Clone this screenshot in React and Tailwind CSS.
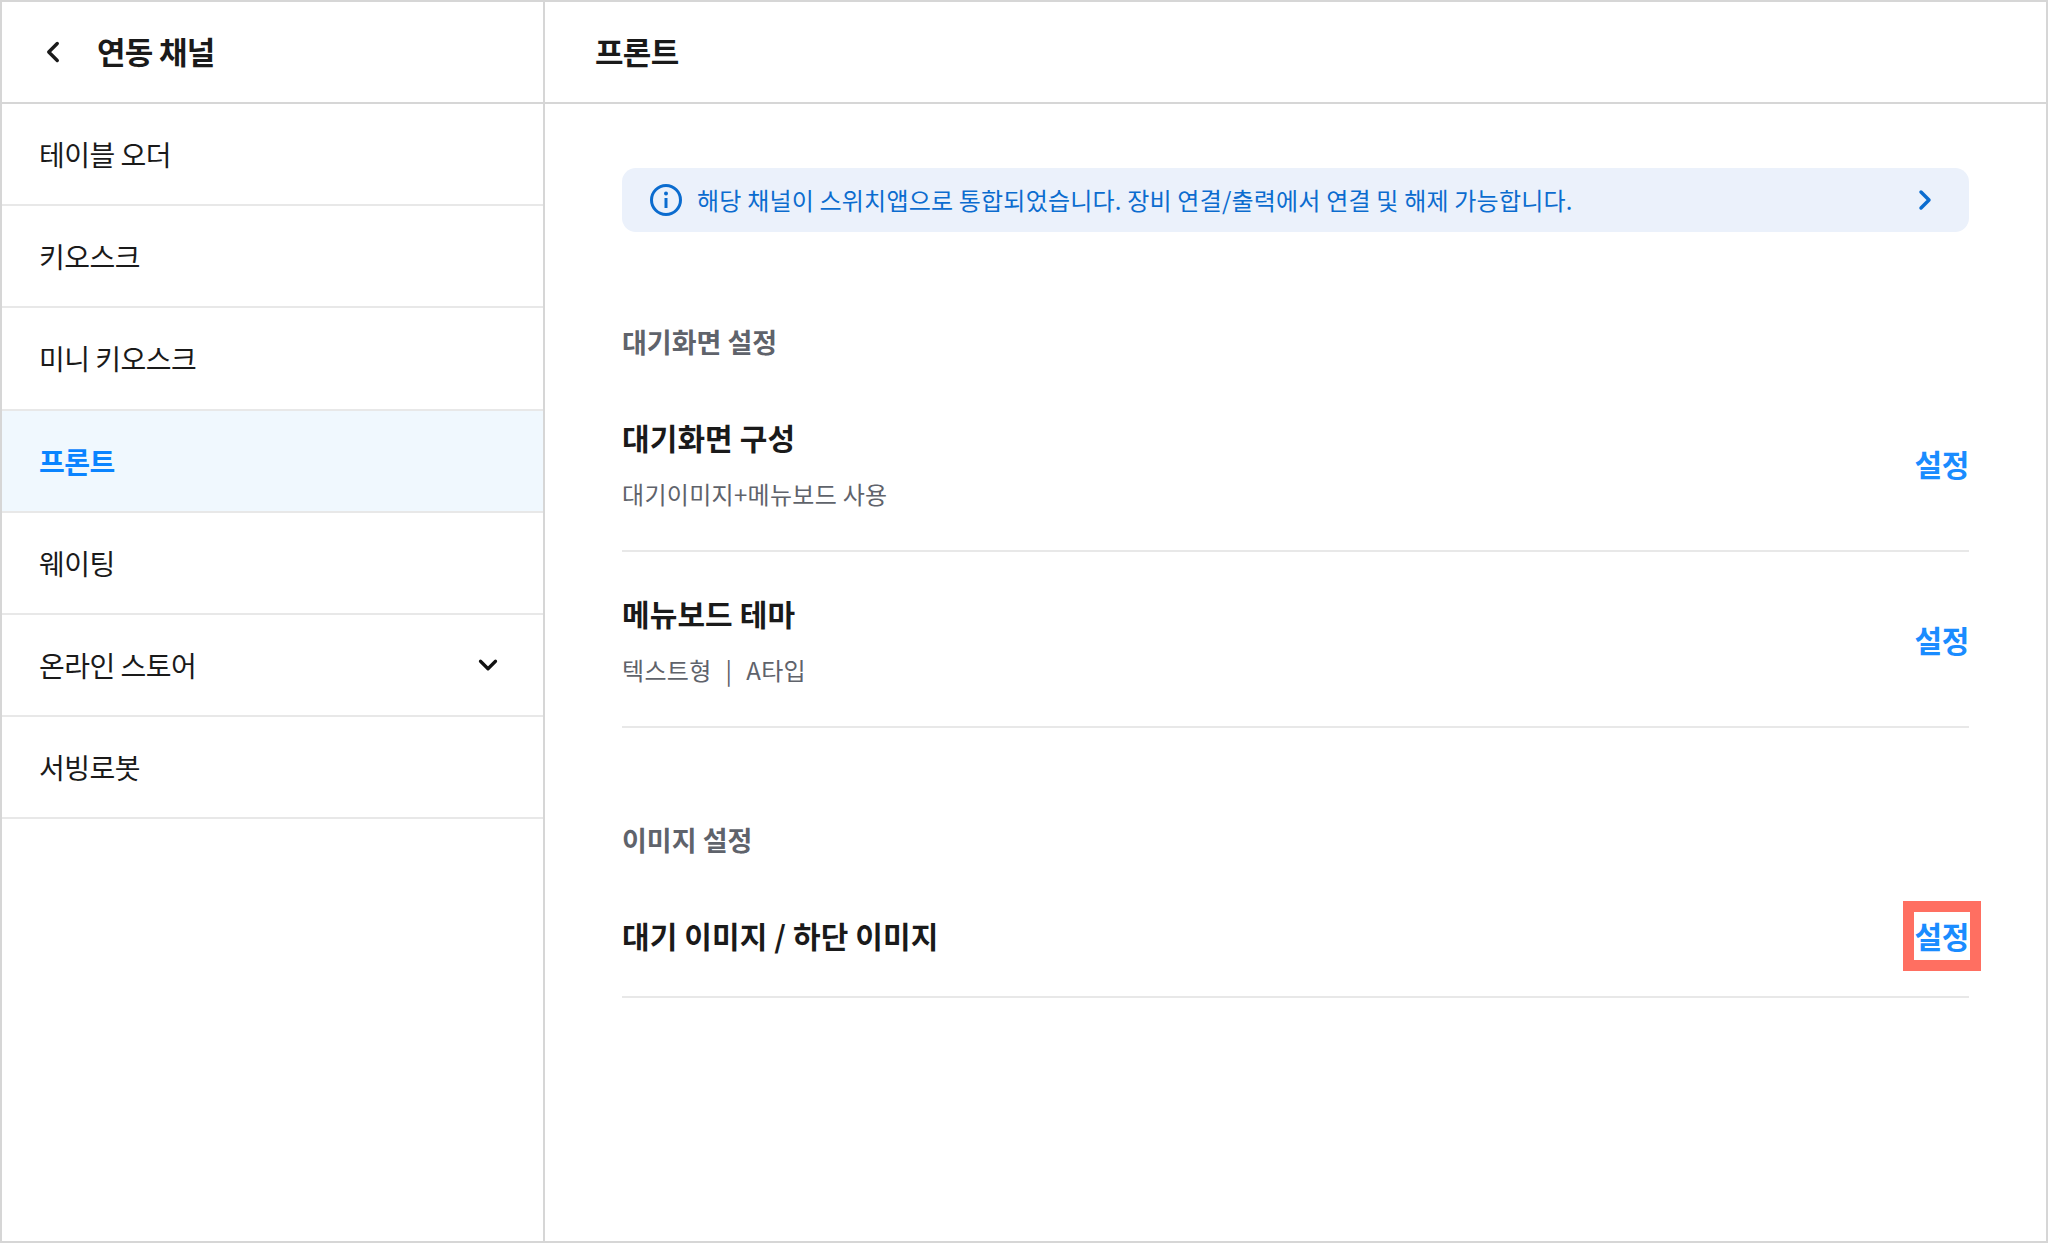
import { ChevronDown, ChevronLeft, ChevronRight } from 'lucide-react';

const channels = ['테이블 오더', '키오스크', '미니 키오스크', '프론트', '웨이팅', '온라인 스토어', '서빙로봇'];

const SettingRow = ({ title, sub, highlight }) => (
  <div className={`flex items-center justify-between border-b-2 border-[#e8e8e8] ${sub ? 'h-[176px]' : 'h-[124px]'}`}>
    <div>
      <div className="text-[30px] leading-[40px] font-bold text-[#1a1a1a] tracking-[0.1px]">{title}</div>
      {sub && <div className="mt-[21px] text-[24px] leading-[32px] text-[#5f636b] tracking-[0.3px]">{sub}</div>}
    </div>
    <button className="relative text-[30px] leading-[48px] font-bold text-[#1a8cff] tracking-[-0.4px]">
      설정
      {highlight && <span className="absolute -inset-x-[12px] -top-[10px] -bottom-[12px] border-[11px] border-[#ff6f61]" />}
    </button>
  </div>
);

const SectionTitle = ({ children }) => (
  <h3 className="text-[27px] leading-[36px] font-bold text-[#5f636b]">{children}</h3>
);

export default function App() {
  return (
    <div className="w-[2048px] h-[1243px] flex flex-col bg-white border-2 border-[#d6d6d6] overflow-hidden font-['Noto_Sans_CJK_KR',sans-serif] antialiased">
      <header className="h-[102px] shrink-0 flex border-b-2 border-[#d6d6d6]">
        <div className="w-[543px] shrink-0 flex items-center border-r-2 border-[#d6d6d6] pl-[34px]">
          <ChevronLeft className="w-[34px] h-[34px] text-[#1a1a1a]" strokeWidth={2.4} />
          <span className="ml-[27px] -mt-[2px] text-[31px] font-bold text-[#1a1a1a] tracking-[-0.7px]">연동 채널</span>
        </div>
        <div className="flex-1 flex items-center pl-[50px]">
          <span className="-mt-[2px] text-[31px] font-bold text-[#1a1a1a] tracking-[-0.7px]">프론트</span>
        </div>
      </header>
      <div className="flex-1 flex min-h-0">
        <nav className="w-[543px] shrink-0 border-r-2 border-[#d6d6d6]">
          {channels.map((name) => {
            const active = name === '프론트';
            return (
              <div
                key={name}
                className={`h-[102.2px] flex items-center justify-between pl-[37px] pr-[40px] border-b-2 border-[#e8e8e8] text-[28px] tracking-[-0.5px] ${active ? 'bg-[#f0f8fe] text-[#0a84ff] font-bold' : 'text-[#1a1a1a]'}`}
              >
                <span>{name}</span>
                {name === '온라인 스토어' && <ChevronDown className="w-[30px] h-[30px] text-[#111]" strokeWidth={2.6} />}
              </div>
            );
          })}
        </nav>
        <main className="flex-1 pt-[64px] pl-[77px] pr-[77px]">
          <div className="h-[64px] flex items-center rounded-[14px] bg-[#ebf1fb] pl-[26px] pr-[28px] text-[#0b6ccf]">
            <svg className="w-[36px] h-[36px] shrink-0" viewBox="0 0 36 36" fill="none">
              <circle cx="18" cy="18" r="14.5" stroke="currentColor" strokeWidth="3" />
              <circle cx="18" cy="11.5" r="2" fill="currentColor" />
              <path d="M18 16v10" stroke="currentColor" strokeWidth="3" />
            </svg>
            <span className="ml-[13px] flex-1 text-[24px] tracking-[0.2px]">해당 채널이 스위치앱으로 통합되었습니다. 장비 연결/출력에서 연결 및 해제 가능합니다.</span>
            <ChevronRight className="w-[32px] h-[32px] shrink-0" strokeWidth={2.6} />
          </div>

          <section className="mt-[92px]">
            <SectionTitle>대기화면 설정</SectionTitle>
            <div className="mt-[16px]">
              <SettingRow title="대기화면 구성" sub="대기이미지+메뉴보드 사용" />
              <SettingRow
                title="메뉴보드 테마"
                sub={<>텍스트형<span className="mx-[14px]">|</span>A타입</>}
              />
            </div>
          </section>

          <section className="mt-[94px]">
            <SectionTitle>이미지 설정</SectionTitle>
            <div className="mt-[16px]">
              <SettingRow title="대기 이미지 / 하단 이미지" highlight />
            </div>
          </section>
        </main>
      </div>
    </div>
  );
}
